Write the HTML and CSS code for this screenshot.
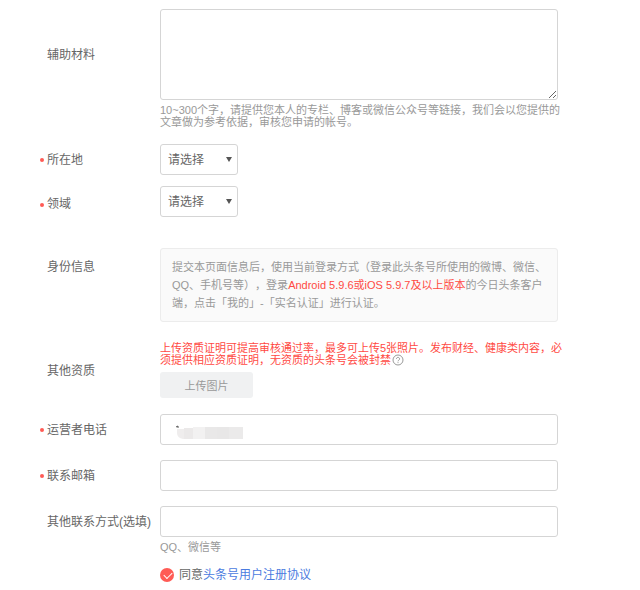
FILE: index.html
```
<!DOCTYPE html>
<html lang="zh-CN">
<head>
  <meta charset="UTF-8">
  <meta name="viewport" content="width=device-width, initial-scale=1.0">
  <title>头条号注册</title>
  <link rel="stylesheet" href="styles.css">
</head>
<body>
  <form class="register-form">
    <div class="row material">
      <label class="label" for="material">辅助材料</label>
      <div class="field">
        <textarea id="material"></textarea>
        <p class="hint">10~300个字，请提供您本人的专栏、博客或微信公众号等链接，我们会以您提供的<br>文章做为参考依据，审核您申请的帐号。</p>
      </div>
    </div>

    <div class="row place">
      <label class="label required" for="place">所在地</label>
      <div class="field select-box">
        <select id="place"><option>请选择</option></select>
      </div>
    </div>

    <div class="row domain">
      <label class="label required" for="domain">领域</label>
      <div class="field select-box">
        <select id="domain"><option>请选择</option></select>
      </div>
    </div>

    <div class="row identity">
      <div class="label">身份信息</div>
      <div class="field notice">提交本页面信息后，使用当前登录方式（登录此头条号所使用的微博、微信、<br>QQ、手机号等），登录<em>Android 5.9.6或iOS 5.9.7及以上版本</em>的今日头条客户<br>端，点击「我的」-「实名认证」进行认证。</div>
    </div>

    <div class="row credentials">
      <div class="label">其他资质</div>
      <div class="field">
        <p class="hint warning">上传资质证明可提高审核通过率，最多可上传5张照片。发布财经、健康类内容，必<br>须提供相应资质证明，无资质的头条号会被封禁
          <svg class="help" viewBox="0 0 12 12"><circle cx="6" cy="6" r="5"/><path d="M4.4 4.9a1.6 1.5 0 1 1 2.5 1.2c-.6.4-.9.6-.9 1.2M6 8.2v.9"/></svg></p>
        <button type="button" class="upload">上传图片</button>
      </div>
    </div>

    <div class="row">
      <label class="label required" for="phone">运营者电话</label>
      <div class="field phone">
        <input type="text" id="phone">
        <svg class="mosaic" viewBox="0 0 70 16">
          <path d="M2 3l2-1v2" fill="none" stroke="#555"/>
          <path d="M3 5h16v10H9q-6-1-6-6z" fill="#efeded"/>
          <path d="M19 3h12v12H19z" fill="#f2f1f1"/>
          <path d="M10 4h9v11h-9z" fill="#ebe9e9"/>
          <path d="M31 3h12v12H31z" fill="#e9e8e8"/>
          <path d="M43 3h12v12H43z" fill="#e8e7e7"/>
          <path d="M55 3h14v12H55z" fill="#ebeaea"/>
        </svg>
      </div>
    </div>

    <div class="row">
      <label class="label required" for="email">联系邮箱</label>
      <div class="field"><input type="text" id="email"></div>
    </div>

    <div class="row contact">
      <label class="label" for="contact">其他联系方式(选填)</label>
      <div class="field">
        <input type="text" id="contact">
        <p class="hint">QQ、微信等</p>
      </div>
    </div>

    <div class="agreement">
      <input type="checkbox" id="agree" checked>
      <label for="agree">同意<a href="#">头条号用户注册协议</a></label>
    </div>
  </form>
</body>
</html>
```

FILE: styles.css
```
* {
  margin: 0;
  padding: 0;
  box-sizing: border-box;
}

body {
  background: #fff;
  color: #666;
  font-family: "Liberation Sans", "Noto Sans CJK SC", sans-serif;
  font-size: 12px;
  text-spacing-trim: space-all;
}

input, textarea, select, button {
  font: inherit;
  color: inherit;
}

.register-form {
  padding: 9px 82px 0 47px;
}

.row {
  display: grid;
  grid-template-columns: 113px minmax(0, 1fr);
  margin-bottom: 15px;
}

.label {
  position: relative;
  height: 31px;
  line-height: 33px;
  white-space: nowrap;
}

.required::before {
  content: "";
  position: absolute;
  left: -7px;
  top: 14px;
  width: 4px;
  height: 4px;
  border-radius: 50%;
  background: #ff5b55;
}

input[type="text"], textarea, select {
  display: block;
  width: 100%;
  height: 31px;
  padding: 0 14px;
  border: 1px solid #d5d5d5;
  border-radius: 3px;
  background: #fff;
  outline: none;
}

textarea {
  height: 91px;
  padding: 8px;
}

.hint {
  margin-top: 4px;
  font-size: 11px;
  line-height: 12px;
  color: #999;
  white-space: nowrap;
}

.material {
  margin-bottom: 16px;
}

.material .label {
  height: 91px;
  line-height: 93px;
}

.place {
  margin-bottom: 11px;
}

.domain {
  margin-bottom: 27px;
}

.domain .label {
  height: 35px;
  line-height: 37px;
}

.domain .required::before {
  top: 17px;
}

.select-box {
  position: relative;
  width: 78px;
}

select {
  appearance: none;
  padding: 1px 7px 0;
}

.select-box::after {
  content: "";
  position: absolute;
  right: 6px;
  top: 13px;
  border: 3px solid transparent;
  border-top: 5px solid #555;
  border-bottom: 0;
  pointer-events: none;
}

.identity {
  margin-bottom: 20px;
}

.identity .label {
  height: 38px;
  line-height: 38px;
}

.notice {
  padding: 9px 11px;
  border: 1px solid #ececec;
  border-radius: 3px;
  background: #fafafa;
  color: #999;
  font-size: 11px;
  line-height: 18px;
  white-space: nowrap;
}

.notice em {
  font-style: normal;
  color: #ff4a43;
}

.credentials {
  margin-bottom: 16px;
}

.credentials .label {
  align-self: center;
}

.hint.warning {
  margin: 0 0 6px;
  color: #ff4a43;
}

.help {
  width: 12px;
  height: 12px;
  margin-left: -2px;
  vertical-align: top;
  fill: none;
  stroke: #999;
}

.upload {
  display: block;
  width: 93px;
  height: 26px;
  border: 0;
  border-radius: 3px;
  background: #f0f1f2;
  color: #999;
  font-size: 11px;
}

.phone {
  position: relative;
}

.mosaic {
  position: absolute;
  left: 14px;
  top: 10px;
  width: 70px;
  height: 16px;
}

.contact {
  margin-bottom: 13px;
}

.agreement {
  display: flex;
  align-items: center;
  gap: 5px;
  margin-left: 113px;
  line-height: 18px;
}

.agreement input {
  appearance: none;
  position: relative;
  width: 14px;
  height: 14px;
  border-radius: 50%;
  background: #ff5b55;
}

.agreement input:checked::after {
  content: "";
  position: absolute;
  left: 4px;
  top: 4px;
  width: 7px;
  height: 4px;
  border: solid #fff;
  border-width: 0 0 1px 1px;
  transform: rotate(-45deg);
}

.agreement a {
  color: #4b7be0;
  text-decoration: none;
}
```
